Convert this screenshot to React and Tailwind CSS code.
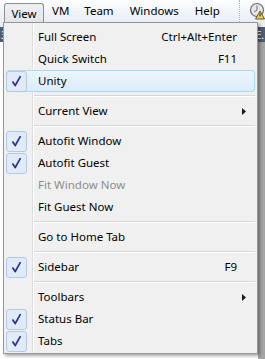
const items = [
  { label: 'Full Screen', shortcut: 'Ctrl+Alt+Enter' },
  { label: 'Quick Switch', shortcut: 'F11' },
  { label: 'Unity', checked: true, hover: true },
  'sep',
  { label: 'Current View', submenu: true },
  'sep',
  { label: 'Autofit Window', checked: true },
  { label: 'Autofit Guest', checked: true },
  { label: 'Fit Window Now', disabled: true },
  { label: 'Fit Guest Now' },
  'sep',
  { label: 'Go to Home Tab' },
  'sep',
  { label: 'Sidebar', checked: true, shortcut: 'F9' },
  'sep',
  { label: 'Toolbars', submenu: true },
  { label: 'Status Bar', checked: true },
  { label: 'Tabs', checked: true },
]

function Check() {
  return (
    <div className="w-[21px] h-[21px] rounded-[3px] border border-[#b3c8e3] bg-[#e2eaf5] flex items-center justify-center">
      <svg width="11" height="12" viewBox="0 0 11 12">
        <path d="M1.5 6.5 L4.2 10.5 L9.5 1.2" fill="none" stroke="#23339a" strokeWidth="1.7" strokeLinejoin="round" />
      </svg>
    </div>
  )
}

function MenuRow({ item }) {
  return (
    <div
      className={`relative flex items-center h-[22px] rounded-[3px] border ${
        item.hover
          ? 'border-[#aad9f1] bg-gradient-to-b from-[#eaf5fc] to-[#dcedfa]'
          : 'border-transparent'
      }`}
    >
      <div className="w-[22px] flex items-center justify-start -ml-px">
        {item.checked && <Check />}
      </div>
      <span className={`ml-[10px] flex-1 ${item.disabled ? 'text-[#8d8d8d]' : 'text-black'}`}>
        {item.label}
      </span>
      {item.shortcut && <span className="mr-[17px]">{item.shortcut}</span>}
      {item.submenu && (
        <svg width="4" height="7" viewBox="0 0 4 7" className="mr-[8px]">
          <path d="M0 0 L4 3.5 L0 7 Z" fill="#1a1a1a" />
        </svg>
      )}
    </div>
  )
}

export default function App() {
  const font = { fontFamily: '"Segoe UI", "Noto Sans", "Liberation Sans", sans-serif' }

  return (
    <div className="relative w-[265px] h-[359px] overflow-hidden bg-white text-[11.5px] leading-none" style={font}>
      {/* MENU BAR */}
      <div className="h-[22px] flex items-stretch bg-gradient-to-b from-[#fcfdfe] to-[#e8eef7]">
        <div className="ml-[4px] mt-[3px] w-[40px] rounded-t-[3px] border border-b-0 border-[#8e8f8f] bg-gradient-to-b from-[#eef0f2] to-[#e4e7ea] flex items-center justify-center pt-[1px]">
          View
        </div>
        <div className="flex items-center pl-[1px]">
          <span className="px-[7px]">VM</span>
          <span className="px-[8px]">Team</span>
          <span className="px-[8px]">Windows</span>
          <span className="px-[8px]">Help</span>
        </div>
        <div className="flex-1" />
        <div className="w-px mr-[9px] border-l border-dotted border-[#a9b2bf]" />
        <div className="w-[16px] flex items-center">
          <svg width="16" height="18" viewBox="0 0 16 18">
            <circle cx="8" cy="8" r="6.5" fill="#e6e6e6" stroke="#6e6e6e" strokeWidth="1.2" />
            <path d="M8 8 L8 3.5 M8 8 L5 10" stroke="#6e6e6e" strokeWidth="1" />
            <path d="M11 9 L15.5 17 L6.5 17 Z" fill="#f5d33c" stroke="#333" strokeWidth="0.8" />
            <path d="M11 11.5 L11 14.5" stroke="#111" strokeWidth="1" />
          </svg>
        </div>
      </div>

      {/* WINDOW BEHIND */}
      <div className="h-[5px] bg-[#eeeeee]" />
      <div className="h-[15px] bg-[#4f5d72] flex items-center justify-between px-[1px] text-white text-[10px]">
        <span>3</span>
        <span>E.</span>
      </div>
      <div className="flex h-[317px]">
        <div className="flex-1 bg-white" />
        <div className="w-[7px] bg-[#a4a4a4]" />
      </div>

      {/* DROPDOWN */}
      <div className="absolute left-[3px] top-[22px] w-[255px] border border-[#979797] bg-[#f0f0f0] pt-[3px] pb-[1px] px-[2px] shadow-[2px_2px_3px_rgba(0,0,0,0.35)]">
        <div className="absolute top-0 bottom-0 left-[28px] w-[2px] border-l border-[#dddddd] bg-white" />
        {items.map((item, i) =>
          item === 'sep' ? (
            <div key={i} className="relative h-[8px] flex flex-col justify-center pl-[28px]">
              <div className="h-px bg-[#d7d7d7]" />
              <div className="h-px bg-white" />
            </div>
          ) : (
            <MenuRow key={i} item={item} />
          )
        )}
      </div>
    </div>
  )
}
